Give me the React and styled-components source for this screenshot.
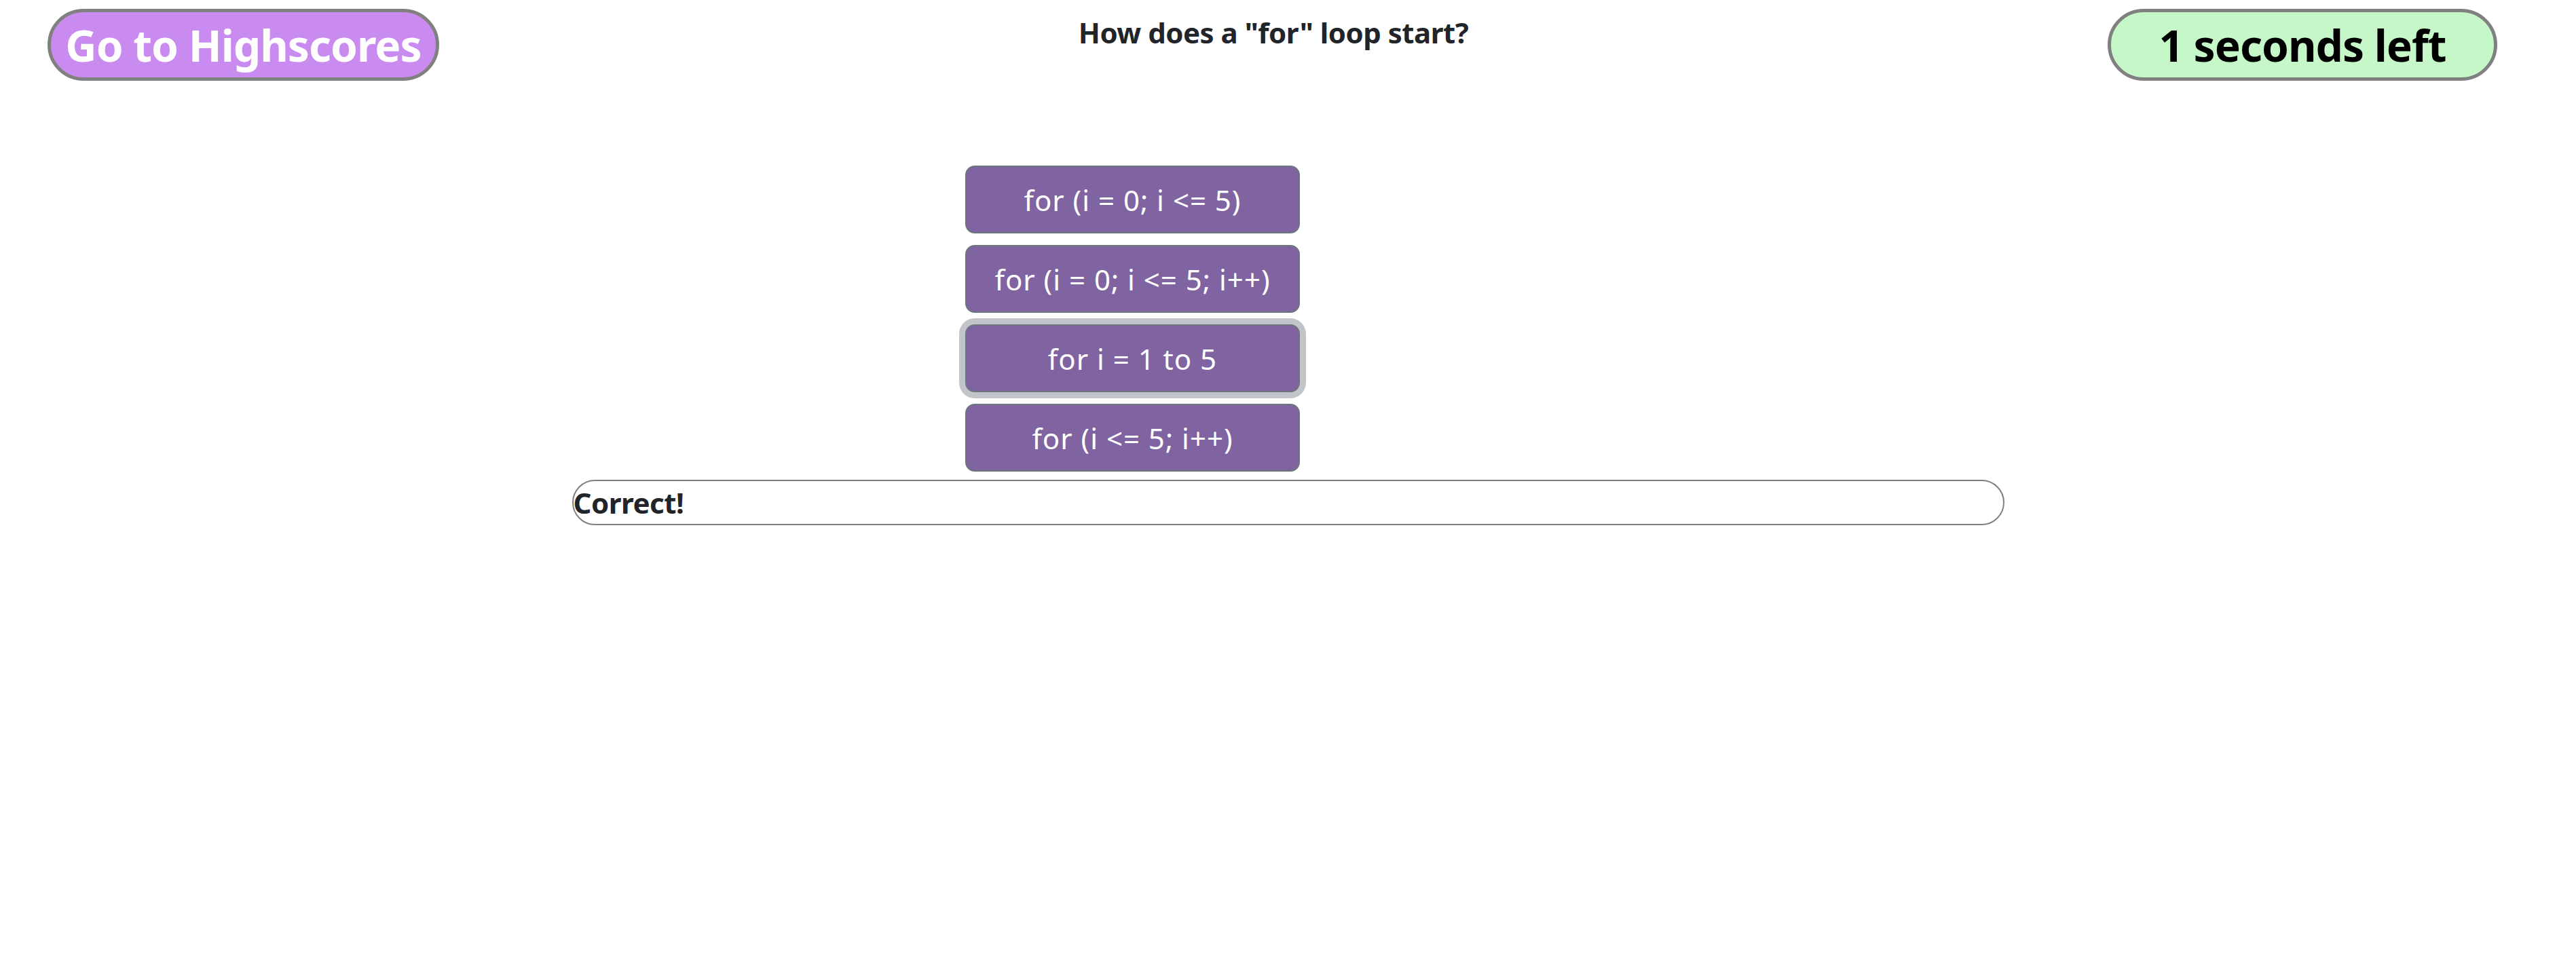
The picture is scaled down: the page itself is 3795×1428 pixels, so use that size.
import styled, {createGlobalStyle} from "styled-components";

const answers = [
  "for (i = 0; i <= 5)",
  "for (i = 0; i <= 5; i++)",
  "for i = 1 to 5",
  "for (i <= 5; i++)",
];

function App() {
  return (
    <>
      <GlobalStyle/>
      <Page>
        <Header>
          <HighscoresButton type="button">Go to Highscores</HighscoresButton>
          <Question>How does a "for" loop start?</Question>
          <Timer>1 seconds left</Timer>
        </Header>
        <Answers>
          {answers.map((answer, i) => (
            <AnswerButton key={answer} type="button" $focused={i === 2}>{answer}</AnswerButton>
          ))}
        </Answers>
        <Feedback>Correct!</Feedback>
      </Page>
    </>
  );
}

const GlobalStyle = createGlobalStyle`
  body {
    margin: 0;
    background: #ffffff;
    font-family: "Noto Sans", "Open Sans", sans-serif;
    color: #212529;
  }
`

const Page = styled.main`
  width: 3795px;
  min-height: 1428px;
`

const Header = styled.header`
  display: flex;
  justify-content: space-between;
  align-items: flex-start;
  padding: 13px 116px 0 70px;
`

const Pill = styled.div`
  box-sizing: border-box;
  height: 106px;
  display: flex;
  align-items: center;
  justify-content: center;
  border: 5px solid #808080;
  border-radius: 999px;
  font-weight: 700;
  font-size: 64px;
  letter-spacing: -1px;
`

const HighscoresButton = styled(Pill).attrs({as: "button"})`
  width: 577px;
  padding: 0;
  background-color: #c98bf0;
  color: #ffffff;
  font-family: inherit;
  cursor: pointer;
`

const Timer = styled(Pill)`
  width: 574px;
  background-color: #c6f7c8;
  color: #000000;
`

const Question = styled.h1`
  margin: 5px 0 0;
  font-size: 42px;
  line-height: 60px;
  font-weight: 700;
  letter-spacing: -0.5px;
  color: #212529;
`

const Answers = styled.div`
  display: flex;
  flex-direction: column;
  gap: 17px;
  width: 493px;
  margin: 125px 0 0 1422px;
`

const AnswerButton = styled.button`
  box-sizing: border-box;
  height: 100px;
  background-color: #8064a2;
  border: 2px solid #6c757d;
  border-radius: 14px;
  color: #ffffff;
  font-family: inherit;
  font-size: 42px;
  font-weight: 400;
  letter-spacing: 1px;
  box-shadow: ${p => p.$focused ? "0 0 0 9px #c1c5c9" : "none"};
  cursor: pointer;
`

const Feedback = styled.div`
  box-sizing: border-box;
  width: 2110px;
  height: 67px;
  margin: 12px auto 0;
  display: flex;
  align-items: center;
  padding-left: 0;
  border: 2px solid #808080;
  border-radius: 999px;
  font-size: 42px;
  font-weight: 700;
  letter-spacing: -0.5px;
  color: #212529;
`

export default App;
